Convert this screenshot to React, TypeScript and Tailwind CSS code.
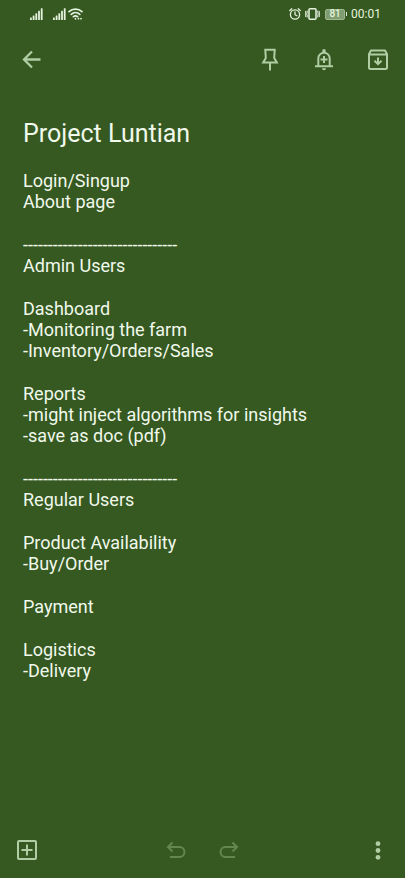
import type { ReactNode } from "react";

const DIVIDER = "-".repeat(31);

const sections: string[][] = [
  ["Login/Singup", "About page"],
  [DIVIDER, "Admin Users"],
  ["Dashboard", "-Monitoring the farm", "-Inventory/Orders/Sales"],
  ["Reports", "-might inject algorithms for insights", "-save as doc (pdf)"],
  [DIVIDER, "Regular Users"],
  ["Product Availability", "-Buy/Order"],
  ["Payment"],
  ["Logistics", "-Delivery"],
];

function IconButton({ label, children, disabled }: { label: string; children: ReactNode; disabled?: boolean }) {
  return (
    <button type="button" aria-label={label} disabled={disabled} className="size-6 text-[#b0cda4] disabled:text-[#65874f]">
      <svg viewBox="0 0 24 24" className="size-6" fill="none" stroke="currentColor" strokeWidth="2">
        {children}
      </svg>
    </button>
  );
}

function Signal() {
  return (
    <svg viewBox="0 0 13 12" className="h-3 w-[13px]" fill="currentColor" aria-hidden="true">
      <rect x="0" y="9.5" width="1.8" height="2.5" rx=".5" />
      <rect x="2.7" y="7.5" width="1.8" height="4.5" rx=".5" />
      <rect x="5.4" y="5.3" width="1.8" height="6.7" rx=".5" />
      <rect x="8.1" y="2.8" width="1.8" height="9.2" rx=".5" />
      <rect x="10.8" y="0.3" width="1.8" height="11.7" rx=".5" />
    </svg>
  );
}

function StatusBar() {
  return (
    <div className="flex h-7 items-center justify-between pr-6 pl-[30px] text-[#e6f3df]">
      <div className="flex items-center">
        <Signal />
        <span className="w-[10px]" />
        <Signal />
        <svg viewBox="0 0 16 12" className="ml-[2px] h-3 w-4" fill="none" stroke="currentColor" strokeWidth="1.7" strokeLinecap="round" aria-hidden="true">
          <path d="M1 3.600C4.600.2 10.400.2 14 3.600" />
          <path d="M3.200 6.300c2.500-2.300 6.100-2.300 8.600 0" />
          <path d="M5.400 8.700c1.300-1.100 2.900-1.100 4.200 0" />
          <path d="M7.500 10.700v.1M10.500 10.600v.1M13 10.600v.1" />
        </svg>
      </div>
      <div className="flex items-center">
        <svg viewBox="0 0 12 12" className="size-3" fill="none" stroke="currentColor" strokeWidth="1.300" strokeLinecap="round" aria-hidden="true">
          <circle cx="6" cy="6.500" r="4.600" />
          <path d="M.8 2.500 2.800.8M11.200 2.500 9.200.8M6 4v2.700l1.800 1" />
        </svg>
        <svg viewBox="0 0 15 12" className="ml-1 h-3 w-[15px]" fill="none" stroke="currentColor" aria-hidden="true">
          <rect x="4" y=".8" width="7" height="10.400" rx="1" strokeWidth="1.500" />
          <path d="M.7 3v6M2.200 2.500v2.500l-.6 1 .6 1v2.500M14.300 3v6M12.800 2.500v2.500l.6 1-.6 1v2.500" />
        </svg>
        <div className="ml-[5px] flex items-center gap-px">
          <span className="flex h-[11px] w-5 items-center justify-center rounded-xs border border-[#9db68f] bg-[#7f9d70] text-[10px] leading-none font-medium">81</span>
          <span className="h-1 w-px bg-[#dcecd3]" />
        </div>
        <time className="ml-1 text-xs">00:01</time>
      </div>
    </div>
  );
}

export default function App() {
  return (
    <div className="flex min-h-screen flex-col bg-[#355921] font-[Roboto,sans-serif] text-[#f1f8ec]">
      <StatusBar />
      <header className="flex h-16 items-center justify-between pr-[15px] pl-5">
        <IconButton label="Back">
          <path d="M20.500 11.500H4.500M12 3.500 4 11.500l8 8" strokeWidth="2.300" />
        </IconButton>
        <div className="flex gap-[30px]">
          <IconButton label="Pin note">
            <path d="M7.300 1.700h9.400L16.200 10l2.600 4.500H5.200L7.800 10ZM12 14.500v8" />
          </IconButton>
          <IconButton label="Add reminder">
            <path d="M3 18.300h18M6.300 18.300v-7.900a5.700 5.700 0 0 1 11.400 0v7.900M12 8v7M8.500 11.500h7" />
            <path d="M10 20.300h4a2 2 0 0 1-4 0ZM10.300 4V2.800a1.700 1.700 0 0 1 3.400 0V4Z" fill="currentColor" stroke="none" />
          </IconButton>
          <IconButton label="Archive note">
            <path d="M3 6 5 2.500h14L21 6v13.500a1.500 1.500 0 0 1-1.500 1.500h-15A1.500 1.500 0 0 1 3 19.500ZM3 6.500h18" />
            <path d="M12 9.500V16M8.500 12.700l3.500 3.500 3.500-3.500" />
          </IconButton>
        </div>
      </header>
      <main className="flex-1 px-[23px] pt-[26px]">
        <h1 className="text-[25px]/8">Project Luntian</h1>
        <div className="mt-5 flex flex-col gap-[22px] text-lg/[21px]">
          {sections.map((lines, i) => (
            <div key={i}>
              {lines.map((line) => (
                <p key={line}>{line}</p>
              ))}
            </div>
          ))}
        </div>
      </main>
      <footer className="flex h-14 items-center justify-between px-[15px]">
        <IconButton label="Add">
          <rect x="3" y="3" width="18" height="18" rx="1" />
          <path d="M12 6.500v11M6.500 12h11" />
        </IconButton>
        <div className="flex gap-[29px]">
          <IconButton label="Undo" disabled>
            <path d="M8.500 4.500 4 9l4.500 4.500M4 9h11.500a5 5 0 0 1 0 10H6" />
          </IconButton>
          <IconButton label="Redo" disabled>
            <path d="M15.500 4.500 20 9l-4.500 4.500M20 9H8.500a5 5 0 0 0 0 10H18" />
          </IconButton>
        </div>
        <IconButton label="More options">
          <g fill="currentColor" stroke="none">
            <circle cx="12" cy="5.700" r="2.400" />
            <circle cx="12" cy="12.500" r="2.400" />
            <circle cx="12" cy="19.300" r="2.400" />
          </g>
        </IconButton>
      </footer>
    </div>
  );
}
